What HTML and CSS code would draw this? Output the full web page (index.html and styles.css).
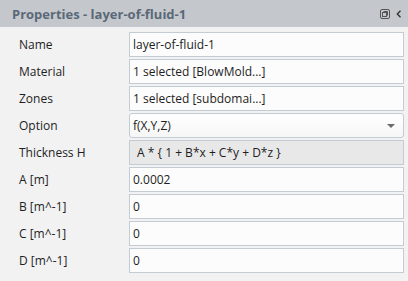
FILE: index.html
```html
<!DOCTYPE html>
<html>
<head>
<meta charset="utf-8">
<link rel="stylesheet" href="styles.css">
</head>
<body>
<div class="panel">
  <div class="header">
    <span class="title">Properties - layer-of-fluid-1</span>
    <span class="tools">
      <svg class="ico" width="10" height="10" viewBox="0 0 10 10">
        <rect x="0.5" y="0.5" width="9" height="9" rx="1.5" fill="none" stroke="#555" stroke-width="1"/>
        <rect x="2.5" y="3.5" width="4" height="4" fill="none" stroke="#555" stroke-width="1"/>
        <path d="M3.5 2.5H7.5V6.5" fill="none" stroke="#555" stroke-width="1"/>
      </svg>
      <svg class="ico chev" width="6" height="8" viewBox="0 0 6 8">
        <path d="M4.5 0.8L1.3 4L4.5 7.2" fill="none" stroke="#333" stroke-width="1.4"/>
      </svg>
    </span>
  </div>
  <div class="rows">
    <div class="label">Name</div><div class="field">layer-of-fluid-1</div>
    <div class="label">Material</div><div class="field">1 selected [BlowMold...]</div>
    <div class="label">Zones</div><div class="field">1 selected [subdomai...]</div>
    <div class="label">Option</div><div class="field select"><span>f(X,Y,Z)</span><span class="arrow"></span></div>
    <div class="label">Thickness H</div><div class="field readonly">&nbsp;A * { 1 + B*x + C*y + D*z }</div>
    <div class="label">A [m]</div><div class="field">0.0002</div>
    <div class="label">B [m^-1]</div><div class="field">0</div>
    <div class="label">C [m^-1]</div><div class="field">0</div>
    <div class="label">D [m^-1]</div><div class="field">0</div>
  </div>
</div>
</body>
</html>
```
FILE: styles.css
```css
html, body {
  margin: 0;
  padding: 0;
  background: #f2f2f2;
}
.panel {
  width: 408px;
  height: 281px;
  background: #f2f2f2;
  font-family: "Open Sans", "Noto Sans", sans-serif;
  font-size: 12px;
  color: #1e1e1e;
  overflow: hidden;
}
.header {
  height: 27px;
  background: #c4c8cc;
  display: flex;
  align-items: center;
  justify-content: space-between;
  padding: 0 6px 0 12px;
}
.title {
  font-weight: bold;
  font-size: 13px;
  color: #5a6878;
}
.tools {
  display: flex;
  align-items: center;
  gap: 6px;
}
.ico { display: block; }
.rows {
  display: grid;
  grid-template-columns: 110px 1fr;
  grid-auto-rows: 27px;
  padding: 4px 4px 0 19px;
}
.label {
  display: flex;
  align-items: center;
}
.field {
  box-sizing: border-box;
  height: 25px;
  margin: 1px 0;
  border: 1px solid #c3cbd5;
  background: #fcfcfc;
  padding-left: 3px;
  display: flex;
  align-items: center;
  white-space: pre;
}
.select {
  border-radius: 3px;
  justify-content: space-between;
  padding-right: 8px;
  background: linear-gradient(#ffffff, #f6f6f6);
}
.arrow {
  width: 0;
  height: 0;
  border-left: 4px solid transparent;
  border-right: 4px solid transparent;
  border-top: 4px solid #6a6a6a;
}
.readonly {
  background: #e8e8e8;
  padding-left: 4px;
}
```
